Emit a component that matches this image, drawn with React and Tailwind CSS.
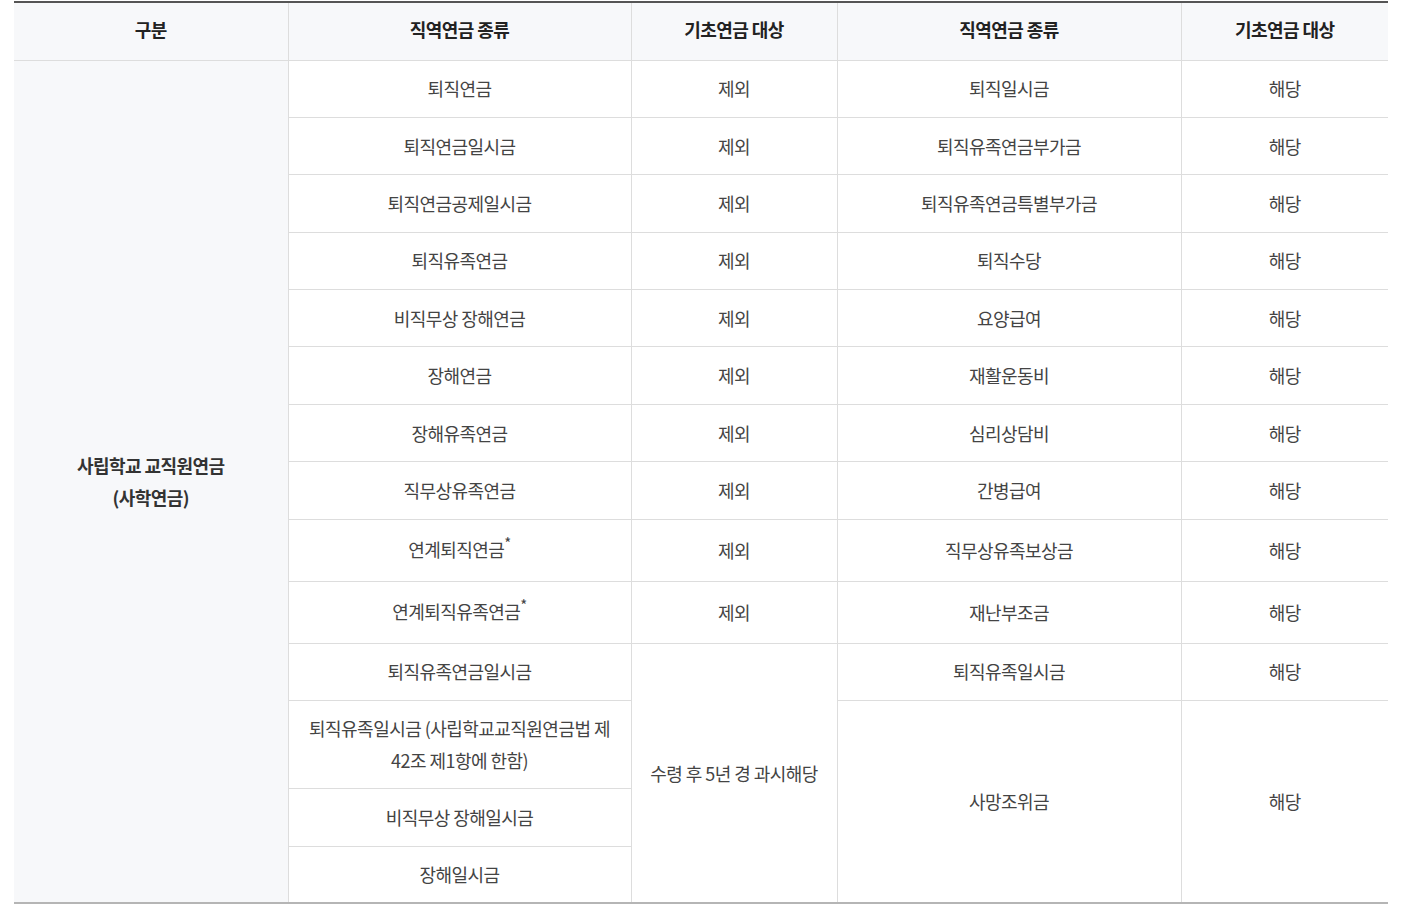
// App.jsx
const rows = [
  ["퇴직연금", "제외", "퇴직일시금", "해당"],
  ["퇴직연금일시금", "제외", "퇴직유족연금부가금", "해당"],
  ["퇴직연금공제일시금", "제외", "퇴직유족연금특별부가금", "해당"],
  ["퇴직유족연금", "제외", "퇴직수당", "해당"],
  ["비직무상 장해연금", "제외", "요양급여", "해당"],
  ["장해연금", "제외", "재활운동비", "해당"],
  ["장해유족연금", "제외", "심리상담비", "해당"],
  ["직무상유족연금", "제외", "간병급여", "해당"],
];

const starRows = [
  ["연계퇴직연금", "제외", "직무상유족보상금", "해당"],
  ["연계퇴직유족연금", "제외", "재난부조금", "해당"],
];

const td = "border border-[#dddddd] text-center align-middle px-5 pt-0 pb-px leading-[32px]";
const th = "border-x border-[#dddddd] text-center align-middle font-bold text-[#222] pb-[3px]";

function App() {
  return (
    <div
      className="bg-white min-h-[907px] pt-px px-[14px] text-[18px] tracking-[-0.03em] text-[#444]"
      style={{ fontFamily: '"Noto Sans CJK KR", "Noto Sans", sans-serif' }}
    >
      <table className="w-[1374px] table-fixed border-collapse border-t-2 border-t-[#555] border-b-2 border-b-[#b5b5b5]">
        <colgroup>
          <col className="w-[274px]" />
          <col className="w-[343px]" />
          <col className="w-[206px]" />
          <col className="w-[344px]" />
          <col className="w-[207px]" />
        </colgroup>
        <thead>
          <tr className="h-[58px] bg-[#f7f8fa] border-b border-b-[#9a9a9a]">
            <th className={th + " border-l-0"}>구분</th>
            <th className={th}>직역연금 종류</th>
            <th className={th}>기초연금 대상</th>
            <th className={th}>직역연금 종류</th>
            <th className={th + " border-r-0"}>기초연금 대상</th>
          </tr>
        </thead>
        <tbody>
          {rows.map((r, i) => (
            <tr key={i} className="h-[57.4px]">
              {i === 0 && (
                <td
                  rowSpan={14}
                  className="border border-l-0 border-[#dddddd] bg-[#f7f8fa] text-center align-middle font-bold text-[#333] leading-[32px]"
                >
                  사립학교 교직원연금
                  <br />
                  (사학연금)
                </td>
              )}
              <td className={td}>{r[0]}</td>
              <td className={td}>{r[1]}</td>
              <td className={td}>{r[2]}</td>
              <td className={td + " border-r-0"}>{r[3]}</td>
            </tr>
          ))}
          {starRows.map((r, i) => (
            <tr key={"s" + i} className="h-[62px]">
              <td className={td}>
                {r[0]}
                <span className="relative -top-[8px] text-[15px]">*</span>
              </td>
              <td className={td}>{r[1]}</td>
              <td className={td}>{r[2]}</td>
              <td className={td + " border-r-0"}>{r[3]}</td>
            </tr>
          ))}
          <tr className="h-[57px]">
            <td className={td}>퇴직유족연금일시금</td>
            <td rowSpan={4} className="border border-[#dddddd] text-center align-middle px-2 leading-[32px]">
              수령 후 5년 경 과시해당
            </td>
            <td className={td}>퇴직유족일시금</td>
            <td className={td + " border-r-0"}>해당</td>
          </tr>
          <tr className="h-[88px]">
            <td className={td + " py-3"}>퇴직유족일시금 (사립학교교직원연금법 제42조 제1항에 한함)</td>
            <td rowSpan={3} className={td}>
              사망조위금
            </td>
            <td rowSpan={3} className={td + " border-r-0"}>
              해당
            </td>
          </tr>
          <tr className="h-[58px]">
            <td className={td}>비직무상 장해일시금</td>
          </tr>
          <tr className="h-[57px]">
            <td className={td}>장해일시금</td>
          </tr>
        </tbody>
      </table>
    </div>
  );
}

export default App;
